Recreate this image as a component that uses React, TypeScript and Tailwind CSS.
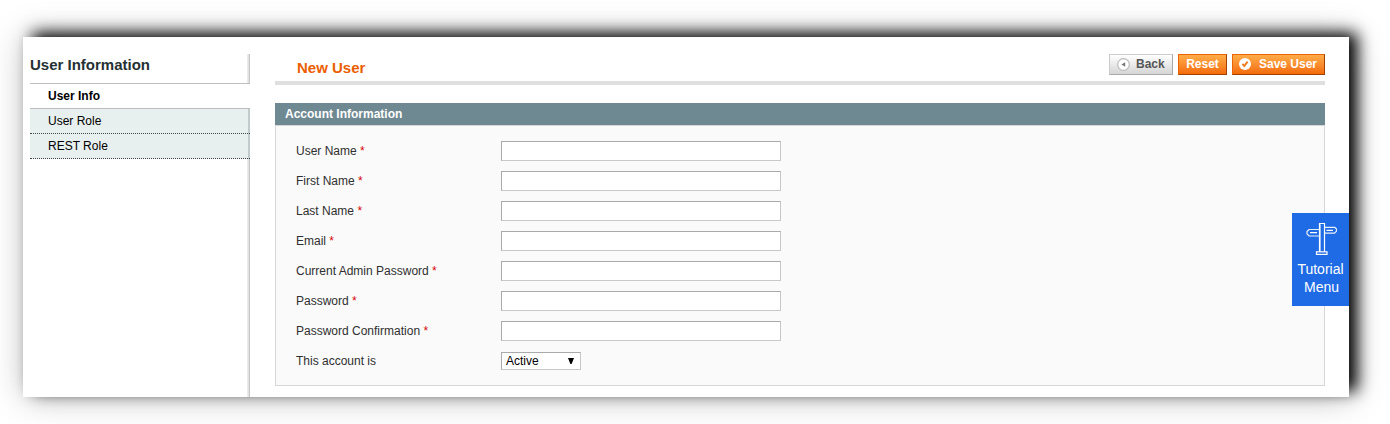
const fields = [
  "User Name",
  "First Name",
  "Last Name",
  "Email",
  "Current Admin Password",
  "Password",
  "Password Confirmation",
];

function Sidebar() {
  const item =
    "h-[25px] border-b border-dotted border-[#444] bg-[linear-gradient(to_right,#e7efef_218px,#c2cbcb_218px)] pl-[18px] leading-[25px]";
  return (
    <aside className="mt-[17px] ml-[7px] w-[220px] shrink-0 bg-[linear-gradient(to_right,#f0f0f0,#e2e2e2_50%,#c3c6c6_67%)] bg-[length:3px_100%] bg-right bg-no-repeat">
      <h3 className="h-[29px] pt-[1px] text-[15px] leading-5 font-bold whitespace-nowrap text-[#253033]">
        User Information
      </h3>
      <ul className="text-[12px] text-black">
        <li className="h-[26px] border-y border-[#bebebe] bg-white pl-[18px] leading-6 font-bold">User Info</li>
        <li className={item}>User Role</li>
        <li className={item}>REST Role</li>
      </ul>
    </aside>
  );
}

function BackIcon() {
  return (
    <svg className="-mt-px" width="13" height="13" viewBox="0 0 13 13">
      <circle cx="6.5" cy="6.5" r="5.8" fill="#fff" stroke="#bdbdbd" strokeWidth="1.2" />
      <path d="M8.2 4.2v4.6L4.4 6.5z" fill="#777" />
    </svg>
  );
}

function SaveIcon() {
  return (
    <svg className="-mt-px" width="12" height="12" viewBox="0 0 12 12">
      <circle cx="6" cy="6" r="6" fill="#fff" />
      <path d="M3.4 5.9l1.9 2.1 3.3-4.4" fill="none" stroke="#f07a1c" strokeWidth="1.9" />
    </svg>
  );
}

function SignpostIcon() {
  return (
    <svg width="33" height="33" viewBox="0 0 33 33" fill="none" stroke="#fff">
      <path d="M15.5 29.5V1.5h5v28" strokeWidth="1.2" />
      <path d="M16.5 2.5v27" strokeOpacity=".55" />
      <rect x="12.5" y="29.8" width="10.5" height="2.6" strokeWidth="1.2" />
      <path
        d="M15 7.5H5.2L3 9.5v2.4l2.2 2.1H15M21 5.3h9.6l1.9 1.7v2.2l-1.9 2H21"
        strokeLinejoin="round"
        strokeOpacity=".9"
        strokeWidth="1.2"
      />
      <path d="M6 10.7h7M22.5 8.3h6.5" strokeWidth="1.2" />
    </svg>
  );
}

function ActionButtons() {
  const orange =
    "flex h-[21px] items-center border border-t-[#ed6502] border-r-[#a04300] border-b-[#a04300] border-l-[#ed6502] bg-linear-to-b from-[#ffac47] to-[#f36b05] text-white";
  return (
    <div className="flex gap-[5px] text-[12px] leading-[18px] font-bold whitespace-nowrap">
      <button className="flex h-[21px] w-16 items-center gap-[6px] border border-t-[#ccc] border-r-[#aaa] border-b-[#aaa] border-l-[#ccc] bg-linear-to-b from-white to-[#d5d5d5] pl-[7px] text-[#555]">
        <BackIcon />
        <span className="-mt-px">Back</span>
      </button>
      <button className={`${orange} w-[49px] justify-center`}>
        <span className="-mt-px">Reset</span>
      </button>
      <button className={`${orange} w-[93px] gap-2 pl-[6px]`}>
        <SaveIcon />
        <span className="-mt-px">Save User</span>
      </button>
    </div>
  );
}

export default function App() {
  return (
    <div className="h-[424px] w-full overflow-hidden bg-white pt-[37px] pl-[23px] font-['Liberation_Sans',Arial,sans-serif]">
      <div className="relative flex h-[360px] w-[1326px] bg-white shadow-[9px_-5px_15px_-1px_#000,2px_0_32px_rgba(0,0,0,0.27)]">
        <Sidebar />
        <main className="ml-[25px] w-[1050px] pt-[17px]">
          <header className="flex h-[31px] items-start justify-between border-b-4 border-[#dfdfdf] pl-[22px]">
            <h1 className="pt-1 text-[15px] leading-5 font-bold text-[#eb5e00]">New User</h1>
            <ActionButtons />
          </header>
          <section className="mt-[18px]">
            <h2 className="h-[22px] bg-[#6f8992] pl-[10px] text-[12px] leading-[22px] font-bold text-white">
              Account Information
            </h2>
            <div className="h-[261px] border border-[#d6d6d6] bg-[#fafafa] pt-[15px] pl-5 text-[12px] text-[#2f2f2f]">
              {fields.map((label) => (
                <label key={label} className="flex h-[30px] items-start">
                  <span className="w-[205px] leading-5">
                    {label} <span className="text-[#d40707]">*</span>
                  </span>
                  <input className="h-5 w-[280px] border border-t-[#aaa] border-r-[#c8c8c8] border-b-[#c8c8c8] border-l-[#aaa] bg-white px-1" />
                </label>
              ))}
              <div className="flex items-start">
                <span className="w-[205px] leading-5">This account is</span>
                <button className="mt-px flex h-[18px] w-20 items-center justify-between border border-t-[#aaa] border-r-[#c8c8c8] border-b-[#c8c8c8] border-l-[#aaa] bg-white pr-[6px] pl-1 leading-4 text-black">
                  Active
                  <svg width="6" height="6" viewBox="0 0 6 6">
                    <path d="M0 0h6L3.6 6H2.4z" />
                  </svg>
                </button>
              </div>
            </div>
          </section>
        </main>
        <button className="absolute top-[176px] right-0 flex h-[93px] w-[57px] flex-col items-center bg-[#1f6be5] pt-[9px] text-[14px] leading-[18px] text-white">
          <SignpostIcon />
          <span className="mt-[5px]">
            Tutorial
            <br />
            <span className="pl-[2px]">Menu</span>
          </span>
        </button>
      </div>
    </div>
  );
}
